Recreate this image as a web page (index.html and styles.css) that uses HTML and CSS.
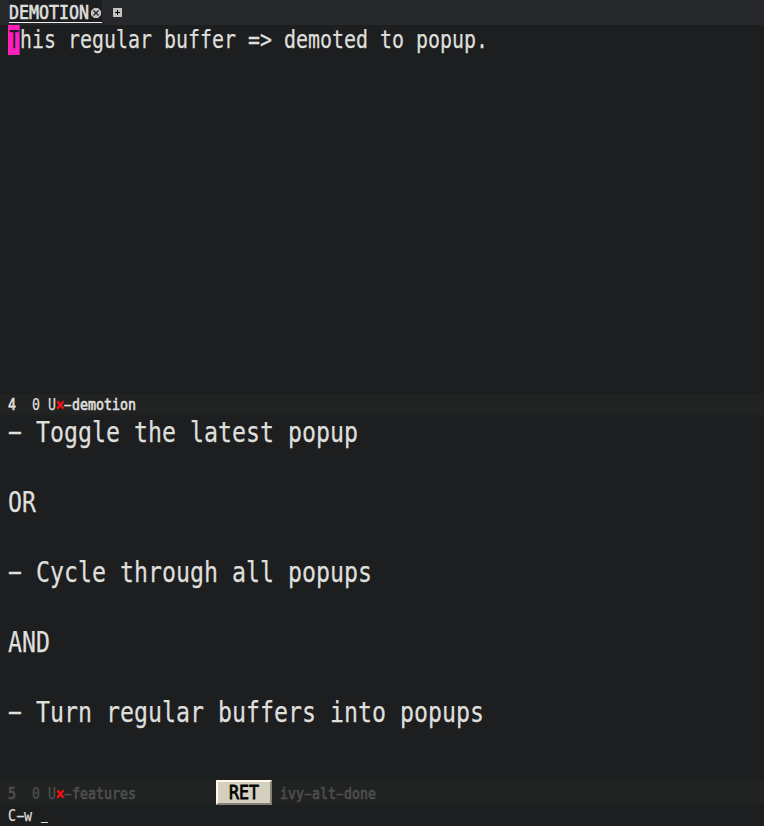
FILE: index.html
```
<!DOCTYPE html>
<html lang="en">
<head>
<meta charset="utf-8">
<title>Popup demotion</title>
<link rel="stylesheet" href="styles.css">
</head>
<body>
<div class="frame">
  <header class="tabs">
    <div class="tab"><span class="tab-name"><span class="mono">DEMOTION</span></span><svg class="close" width="10" height="10" viewBox="0 0 10 10"><path d="M3 0h4l3 3v4l-3 3H3L0 7V3z" fill="#c2c2c2"/><path d="M2.5 2.5l5 5M7.5 2.5l-5 5" stroke="#1d1e20" stroke-width="1.2"/></svg></div>
    <svg class="add" width="9" height="9" viewBox="0 0 9 9"><path d="M0 0h9v9H0z" fill="#c2c2c2"/><path d="M4.5 2v5M2 4.5h5" stroke="#000" stroke-width="1"/></svg>
  </header>
  <main class="buffer"><div class="mono"><span class="cursor"><span class="glyph">T</span></span>his regular buffer =&gt; demoted to popup.</div></main>
  <div class="modeline"><div class="mono"><b>4</b>  0 U<b class="mark">×</b><b><span class="dash">–</span>demotion</b></div></div>
  <section class="popup">
    <div class="mono"><span class="dash">–</span> Toggle the latest popup</div>
    <div class="mono">OR</div>
    <div class="mono"><span class="dash">–</span> Cycle through all popups</div>
    <div class="mono">AND</div>
    <div class="mono"><span class="dash">–</span> Turn regular buffers into popups</div>
  </section>
  <div class="modeline inactive">
    <div class="name"><div class="mono"><b>5</b>  0 U<b class="mark">×</b><b><span class="dash">–</span>features</b></div></div>
    <div class="key"><div class="mono">RET</div></div>
    <div class="mono"><b>ivy<span class="dash">–</span>alt<span class="dash">–</span>done</b></div>
  </div>
  <footer class="echo"><div class="mono">C<span class="dash">–</span>w <span class="caret">_</span></div></footer>
</div>
</body>
</html>
```
FILE: styles.css
```
* { box-sizing: border-box; }
body { margin: 0; background: #1d1e20; color: #dfdfdb; font-family: "DejaVu Sans Mono", monospace; }
.frame { width: 764px; height: 826px; display: flex; flex-direction: column; overflow: hidden; }
/* Condensed cell: each character advances by half the font size. */
.mono { display: block; width: max-content; white-space: pre; transform: scaleX(.8305); transform-origin: 0 50%; -webkit-text-stroke: .25px; }
.dash { display: inline-block; transform: translateY(-.03em) scaleX(.85); font-weight: normal; -webkit-text-stroke: .4px; }
b { font-weight: normal; -webkit-text-stroke: .7px; }
.tabs { flex: none; height: 25px; display: flex; padding-left: 9px; background: #27282b; font-size: 20px; line-height: 24px; }
.tabs .mono { -webkit-text-stroke: .7px; }
.tab { width: 93px; height: 23px; display: flex; background: #1d1e20; border-bottom: 1px solid #eee; }
.tab-name { width: 82px; }
.close { margin-top: 8px; }
.add { margin: 8px 0 0 11px; }
.buffer { flex: none; height: 369px; padding-left: 8px; font-size: 24px; line-height: 30px; }
.cursor { display: inline-block; height: 30px; background: #ff1fbc; color: #1d1e20; vertical-align: top; }
.glyph { display: inline-block; transform: scaleX(.8); }
.modeline { flex: none; height: 21px; display: flex; padding-left: 8px; background: #212322; font-size: 16px; line-height: 21px; }
.mark { color: #f01010; -webkit-text-stroke: 1.1px; }
.popup { flex: none; height: 365px; padding-left: 8px; font-size: 28px; line-height: 35px; }
.popup .mono { margin-bottom: 35px; }
.inactive { height: 25px; line-height: 27px; color: #4d4f4f; }
.name { width: 208px; }
.key { width: 56px; height: 25px; margin-right: 8px; padding-left: 11px; border: 2px solid; border-color: #fff8e7 #858075 #858075 #fff8e7; border-radius: 1px; background: #d5cfc0; color: #000; font-size: 20px; line-height: 21px; }
.key .mono { -webkit-text-stroke: .8px; }
.echo { height: 21px; padding-left: 8px; font-size: 16px; line-height: 21px; }
.caret { display: inline-block; transform: translateY(-2px) scaleX(.8); -webkit-text-stroke: .6px; }
```
